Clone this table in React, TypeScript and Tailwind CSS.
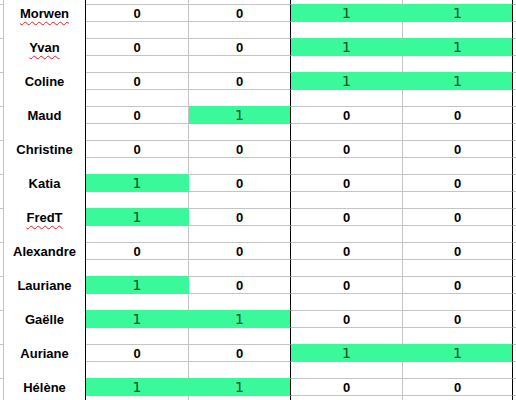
import React from 'react';

const people = [
  { name: 'Morwen', vals: [0, 0, 1, 1], typo: true },
  { name: 'Yvan', vals: [0, 0, 1, 1], typo: true },
  { name: 'Coline', vals: [0, 0, 1, 1] },
  { name: 'Maud', vals: [0, 1, 0, 0] },
  { name: 'Christine', vals: [0, 0, 0, 0] },
  { name: 'Katia', vals: [1, 0, 0, 0] },
  { name: 'FredT', vals: [1, 0, 0, 0], typo: true },
  { name: 'Alexandre', vals: [0, 0, 0, 0] },
  { name: 'Lauriane', vals: [1, 0, 0, 0] },
  { name: 'Gaëlle', vals: [1, 1, 0, 0] },
  { name: 'Auriane', vals: [0, 0, 1, 1] },
  { name: 'Hélène', vals: [1, 1, 0, 0] },
];

// widths incl. right border; black = explicit cell border
const cols = [
  { w: 'w-[103px]', black: false },
  { w: 'w-[102px]', black: true },
  { w: 'w-[112px]', black: false },
  { w: 'w-[110px]', black: true },
];

type Row = { name?: string; typo?: boolean; vals?: number[]; next?: number[] };

const Cell = ({ v, below, black }: { v?: number; below?: number; black: boolean }) => {
  const green = v === 1;
  const right = black ? 'border-r-black' : green ? 'border-r-[#3af99b]' : 'border-r-[#c4c4c4]';
  const bottom = green || below === 1 ? 'border-b-[#3af99b]' : 'border-b-[#c4c4c4]';
  return (
    <div
      className={`h-full border-r border-b ${right} ${bottom} flex items-center justify-center ${
        green ? 'bg-[#3af99b]' : 'bg-white'
      }`}
    >
      {v === 1 && <span className="text-[14px] text-[#0a4f1f] font-['DejaVu_Sans',sans-serif] leading-none">1</span>}
      {v === 0 && <span className="text-[13px] font-bold text-black leading-none">0</span>}
    </div>
  );
};

export default function App() {
  const rows: Row[] = [{ next: people[0].vals }];
  people.forEach((p, i) => {
    rows.push({ name: p.name, typo: p.typo, vals: p.vals });
    rows.push({ next: people[i + 1]?.vals });
  });

  return (
    <div className="w-[516px] h-[400px] overflow-hidden bg-white font-['Liberation_Sans',Arial,sans-serif]">
      <div className="-mt-[12px] flex flex-col">
        {rows.map((r, i) => (
          <div key={i} className="flex h-[17px]">
            <div className={`w-[4px] shrink-0 border-r border-r-[#c4c4c4] ${r.name ? '' : 'border-b border-b-[#c4c4c4]'}`} />
            <div className="w-[82px] shrink-0 border-r border-r-black flex items-center justify-center">
              {r.name && (
                <span
                  className={`text-[13px] font-bold text-black leading-none ${
                    r.typo ? 'underline decoration-wavy decoration-[#e02020] decoration-1 underline-offset-[3px]' : ''
                  }`}
                >
                  {r.name}
                </span>
              )}
            </div>
            {cols.map((c, j) => (
              <div key={j} className={`${c.w} shrink-0 h-full`}>
                <Cell v={r.vals?.[j]} below={r.next?.[j]} black={c.black} />
              </div>
            ))}
            <div className="flex-1 border-b border-b-[#c4c4c4]" />
          </div>
        ))}
      </div>
    </div>
  );
}
